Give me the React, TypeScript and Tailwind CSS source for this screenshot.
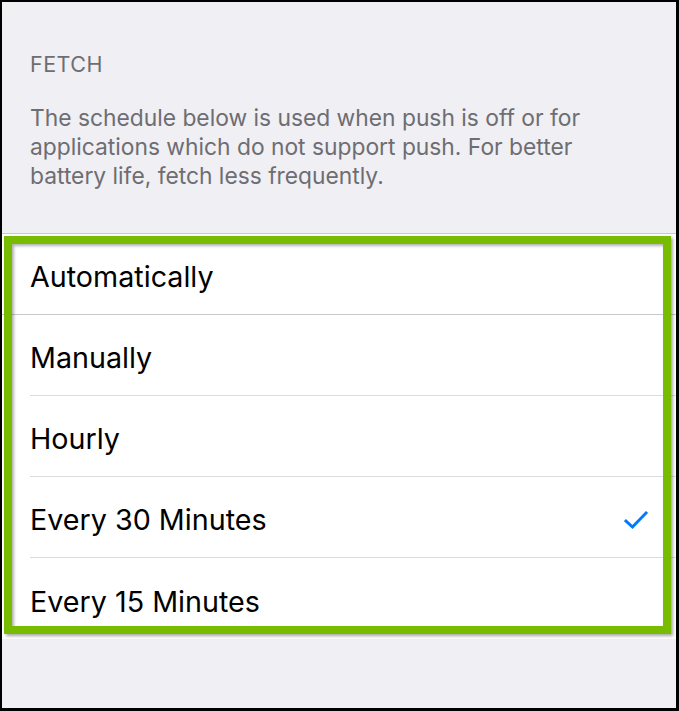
import React from 'react';

type Option = { label: string; checked?: boolean };

const options: Option[] = [
  { label: 'Manually' },
  { label: 'Hourly' },
  { label: 'Every 30 Minutes', checked: true },
  { label: 'Every 15 Minutes' },
];

const Check: React.FC = () => (
  <svg width="24" height="20" viewBox="0 0 24 20" fill="none">
    <path d="M2 11 L8.5 17 L22 3" stroke="#007aff" strokeWidth="3" strokeLinecap="square" />
  </svg>
);

const App: React.FC = () => {
  return (
    <div
      className="relative w-[679px] h-[711px] overflow-hidden bg-[#efeff4] border-2 border-r-[3px] border-b-[3px] border-black"
      style={{ fontFamily: 'Inter, "Noto Sans", sans-serif' }}
    >
      {/* section header */}
      <div className="px-[28px] pt-[48px] pb-[43px] text-[#6d6d72]">
        <div className="text-[21.5px] leading-[28px] tracking-[0.5px]">FETCH</div>
        <p className="mt-[25px] text-[22.8px] leading-[29px]">
          The schedule below is used when push is off or for applications which do not support push. For better
          battery life, fetch less frequently.
        </p>
      </div>

      {/* fetch options */}
      <div className="bg-white border-t border-[#c8c7cc]">
        <div className="h-[81px] flex items-center pt-[6px] px-[28px] border-b border-[#c8c7cc] text-[28.7px] text-black">
          Automatically
        </div>
        {options.map((o, i) => (
          <div key={o.label} className="pl-[28px]">
            <div
              className={
                i < options.length - 1
                  ? 'h-[81px] flex items-center justify-between pt-[6px] pr-[28px] border-b border-[#dcdce0] text-[28.7px] text-black'
                  : 'h-[81px] flex items-center justify-between pt-[6px] pr-[28px] text-[28.7px] text-black'
              }
            >
              <span>{o.label}</span>
              {o.checked && <Check />}
            </div>
          </div>
        ))}
      </div>

      {/* green highlight frame */}
      <div className="absolute left-[2px] top-[234px] w-[667px] h-[398px] border-[8px] border-[#77bc00] shadow-[2px_2px_3px_rgba(0,0,0,0.35),inset_2px_2px_3px_rgba(0,0,0,0.3)]" />
    </div>
  );
};

export default App;
